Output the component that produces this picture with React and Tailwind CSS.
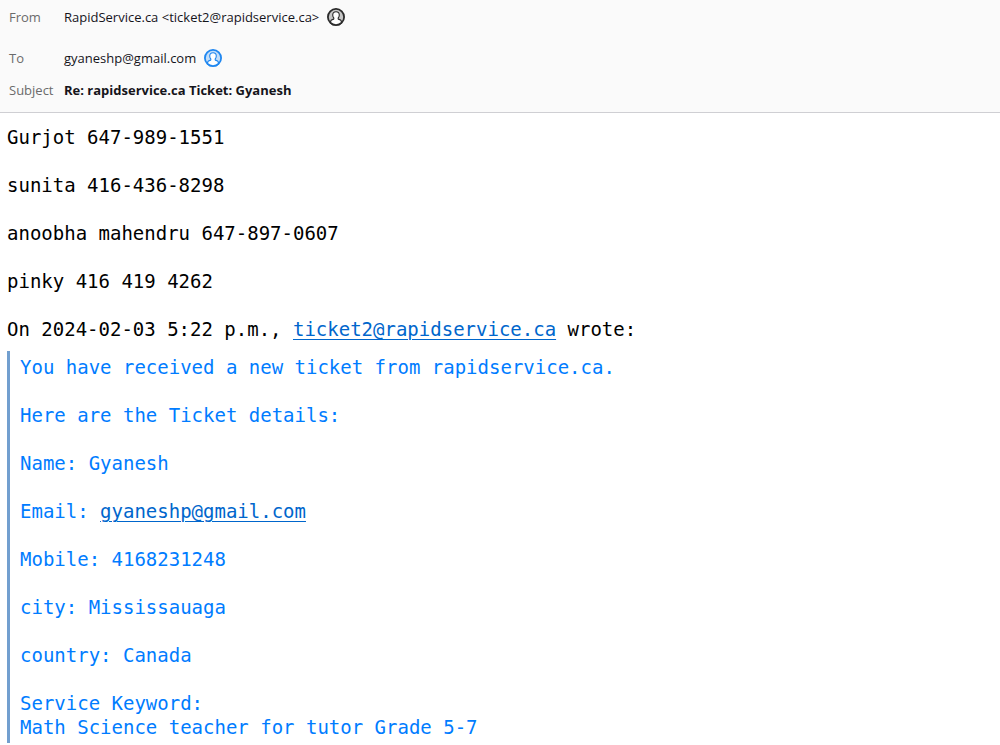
import React from 'react';

const contacts = [
  'Gurjot 647-989-1551',
  'sunita 416-436-8298',
  'anoobha mahendru 647-897-0607',
  'pinky 416 419 4262',
];

const ContactIcon = ({ className }) => (
  <svg viewBox="0 0 18 18" className={`w-[18px] h-[18px] shrink-0 ${className}`} aria-hidden="true">
    <circle cx="9" cy="9" r="8.2" fill="currentColor" fillOpacity="0.25" />
    <path
      d="M3.5 15v-1c0-1.600 1.200-2.500 3.300-2.900V10C6.100 9.300 5.700 8.300 5.700 7.100c0-2 1.300-3.400 3.300-3.400s3.300 1.400 3.300 3.400c0 1.200-.4 2.200-1.100 2.900v1.100c2.100.4 3.300 1.300 3.300 2.900v1L12 17H6z"
      fill="#ffffff"
      stroke="currentColor"
      strokeWidth="1.1"
      strokeLinejoin="round"
    />
    <path d="M4 14.200h10v1.300L11.500 17h-5L4 15.500z" fill="#ffffff" />
    <circle cx="9" cy="9" r="8.1" fill="none" stroke="currentColor" strokeWidth="1.8" />
  </svg>
);

const MailLink = ({ address }) => (
  <a href={`mailto:${address}`} className="text-[#0066cc] underline decoration-1 underline-offset-3">
    {address}
  </a>
);

const HeaderRow = ({ label, children }) => (
  <div className="flex items-center">
    <dt className="w-[55px] shrink-0 text-[#6b6b6b]">{label}</dt>
    <dd className="flex items-center gap-2">{children}</dd>
  </div>
);

const MessageHeader = () => (
  <header className="bg-[#fafafa] border-b border-[#cfcfd3] px-[9px] pt-[7px] pb-3">
    <dl className="text-[13px] leading-5 text-[#15141a] font-['Open_Sans','Noto_Sans',sans-serif]">
      <HeaderRow label="From">
        <span>RapidService.ca &lt;ticket2@rapidservice.ca&gt;</span>
        <ContactIcon className="text-[#2b2b2b]" />
      </HeaderRow>
      <div className="mt-[21px] flex flex-col gap-3">
        <HeaderRow label="To">
          <span>gyaneshp@gmail.com</span>
          <ContactIcon className="text-[#1f87f0]" />
        </HeaderRow>
        <HeaderRow label="Subject">
          <h1 className="font-bold">Re: rapidservice.ca Ticket: Gyanesh</h1>
        </HeaderRow>
      </div>
    </dl>
  </header>
);

const QuotedTicket = () => (
  <blockquote className="mt-[10px] border-l-3 border-[#729fcf] pl-[10px] pt-1 pb-1 text-[#007cff] flex flex-col gap-6">
    <p>You have received a new ticket from rapidservice.ca.</p>
    <p>Here are the Ticket details:</p>
    <p>Name: Gyanesh</p>
    <p>
      Email: <MailLink address="gyaneshp@gmail.com" />
    </p>
    <p>Mobile: 4168231248</p>
    <p>city: Mississauaga</p>
    <p>country: Canada</p>
    <p>
      Service Keyword:
      <br />
      Math Science teacher for tutor Grade 5-7
    </p>
  </blockquote>
);

const App = () => {
  return (
    <div className="min-h-screen bg-white">
      <MessageHeader />

      {/* Message body */}
      <main className="px-[7px] pt-3 text-[19px] leading-6 text-black font-['DejaVu_Sans_Mono',monospace]">
        <div className="flex flex-col gap-6">
          {contacts.map((contact) => (
            <p key={contact}>{contact}</p>
          ))}
          <p>
            On 2024-02-03 5:22 p.m., <MailLink address="ticket2@rapidservice.ca" /> wrote:
          </p>
        </div>
        <QuotedTicket />
      </main>
    </div>
  );
};

export default App;
